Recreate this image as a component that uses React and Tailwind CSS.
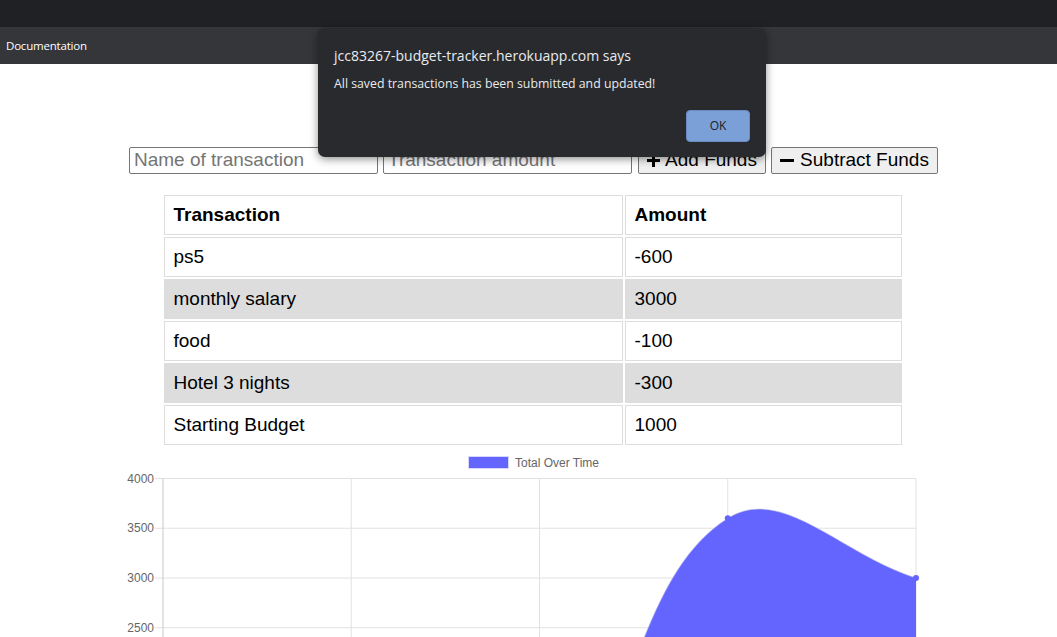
import React from 'react';

const rows = [
    { name: 'ps5', amount: '-600' },
    { name: 'monthly salary', amount: '3000' },
    { name: 'food', amount: '-100' },
    { name: 'Hotel 3 nights', amount: '-300' },
    { name: 'Starting Budget', amount: '1000' },
];

// chart coords are page coords minus 450 on y
const xs = [163, 351.25, 539.5, 727.75, 916];
const values = [1000, 700, 600, 3600, 3000];
const yOf = (v) => 28.5 + (4000 - v) * 0.0995;

function splinePath() {
    const pts = xs.map((x, i) => ({ x, y: yOf(values[i]) }));
    const t = 0.4;
    const cps = pts.map((p, i) => {
        const prev = pts[i - 1] || p;
        const next = pts[i + 1] || p;
        const d01 = Math.hypot(p.x - prev.x, p.y - prev.y);
        const d12 = Math.hypot(next.x - p.x, next.y - p.y);
        const s01 = d01 / (d01 + d12 || 1);
        const s12 = d12 / (d01 + d12 || 1);
        const fa = t * s01;
        const fb = t * s12;
        return {
            prev: { x: p.x - fa * (next.x - prev.x), y: p.y - fa * (next.y - prev.y) },
            next: { x: p.x + fb * (next.x - prev.x), y: p.y + fb * (next.y - prev.y) },
        };
    });
    let d = `M${pts[0].x},${pts[0].y}`;
    for (let i = 1; i < pts.length; i++) {
        const c1 = cps[i - 1].next;
        const c2 = cps[i].prev;
        d += ` C${c1.x},${c1.y} ${c2.x},${c2.y} ${pts[i].x},${pts[i].y}`;
    }
    return { line: d, pts };
}

const Chart = () => {
    const { line, pts } = splinePath();
    const grid = [4000, 3500, 3000, 2500];
    return (
        <svg width="1057" height="187" className="block" style={{ fontFamily: '"Liberation Sans", Arial, sans-serif' }}>
            {/* legend */}
            <rect x="468.5" y="6.5" width="40" height="12" fill="#6464ff" stroke="#d6d6ff" strokeWidth="1" />
            <text x="515" y="16.5" fontSize="12" fill="#666">Total Over Time</text>

            {/* grid */}
            {grid.map((v) => (
                <g key={v}>
                    <line x1="155" x2="916" y1={yOf(v)} y2={yOf(v)} stroke="#e2e2e2" strokeWidth="1" />
                    <text x="154" y={yOf(v) + 4} fontSize="12" fill="#666" textAnchor="end">{v}</text>
                </g>
            ))}
            {xs.map((x, i) => (
                <line key={i} x1={x} x2={x} y1="28.5" y2="187" stroke={i === 0 ? '#c8c8c8' : '#e2e2e2'} strokeWidth="1" />
            ))}

            {/* area */}
            <path d={`${line} L916,187 L163,187 Z`} fill="#6464ff" />
            <path d={line} fill="none" stroke="#c9c9e8" strokeWidth="1" opacity="0.6" />
            {pts.map((p, i) => (
                <circle key={i} cx={p.x} cy={p.y} r="3" fill="#6464ff" />
            ))}
        </svg>
    );
};

export default function App() {
    return (
        <div className="h-[637px] overflow-hidden bg-white relative" style={{ fontFamily: '"Liberation Sans", Arial, sans-serif' }}>
            {/* browser strip + nav */}
            <div className="h-[27px] bg-[#202124]"></div>
            <nav className="h-[37px] bg-[#35363a] flex items-center px-[6px]">
                <span className="text-white text-[11.5px] tracking-[-0.2px] font-['Open_Sans',sans-serif]">Documentation</span>
            </nav>

            <div className="pl-[10px]">
                <div className="h-[83px]"></div>

                {/* form */}
                <div className="flex justify-center items-center h-[27px]">
                    <input
                        placeholder="Name of transaction"
                        className="w-[249px] h-[27px] border border-[#767676] px-[4px] text-[19px] placeholder:text-[#757575] rounded-[2px]"
                    />
                    <input
                        placeholder="Transaction amount"
                        className="ml-[5px] w-[249px] h-[27px] border border-[#767676] px-[4px] text-[19px] placeholder:text-[#757575] rounded-[2px]"
                    />
                    <button className="ml-[6px] w-[128px] h-[27px] bg-[#efefef] border border-[#767676] rounded-[2px] text-[19px] text-black flex items-center justify-center gap-[5px]">
                        <svg width="13" height="13" viewBox="0 0 13 13"><rect x="5" y="0" width="3" height="13" fill="#000" /><rect x="0" y="5" width="13" height="3" fill="#000" /></svg>
                        Add Funds
                    </button>
                    <button className="ml-[5px] w-[167px] h-[27px] bg-[#efefef] border border-[#767676] rounded-[2px] text-[19px] text-black flex items-center justify-center gap-[6px]">
                        <svg width="14" height="13" viewBox="0 0 14 13"><rect x="0" y="5" width="14" height="3" fill="#000" /></svg>
                        Subtract Funds
                    </button>
                </div>

                {/* table */}
                <div className="flex justify-center mt-[19px]">
                    <table className="w-[742px] mr-[2px] table-fixed border-separate border-spacing-[2px] text-[19px] text-black">
                        <colgroup>
                            <col className="w-[459px]" />
                            <col />
                        </colgroup>
                        <thead>
                            <tr>
                                <th className="h-[40px] border border-[#ddd] text-left font-bold px-[9px]">Transaction</th>
                                <th className="h-[40px] border border-[#ddd] text-left font-bold px-[9px]">Amount</th>
                            </tr>
                        </thead>
                        <tbody>
                            {rows.map((r, i) => (
                                <tr key={r.name} className={i % 2 === 1 ? 'bg-[#dddddd]' : ''}>
                                    <td className="h-[40px] border border-[#ddd] px-[9px]">{r.name}</td>
                                    <td className="h-[40px] border border-[#ddd] px-[9px]">{r.amount}</td>
                                </tr>
                            ))}
                        </tbody>
                    </table>
                </div>
            </div>

            <div className="mt-[3px]">
                <Chart />
            </div>

            {/* alert dialog */}
            <div className="absolute left-[318px] top-[28px] w-[448px] h-[129px] bg-[#292a2d] rounded-[7px] shadow-[0_2px_8px_rgba(0,0,0,0.45)] font-['Open_Sans',sans-serif]">
                <div className="pl-[16px] pt-[18px] text-[14px] text-[#e8eaed] leading-[20px]">jcc83267-budget-tracker.herokuapp.com says</div>
                <div className="pl-[16px] pt-[10px] text-[12.3px] text-[#e8eaed] leading-[16px]">All saved transactions has been submitted and updated!</div>
                <div className="flex justify-end pr-[16px] pt-[18px]">
                    <button className="w-[64px] h-[32px] rounded-[4px] bg-[#7b9fd7] border border-[#6a8cc2] text-[12px] text-[#202124]">OK</button>
                </div>
            </div>
        </div>
    );
}
